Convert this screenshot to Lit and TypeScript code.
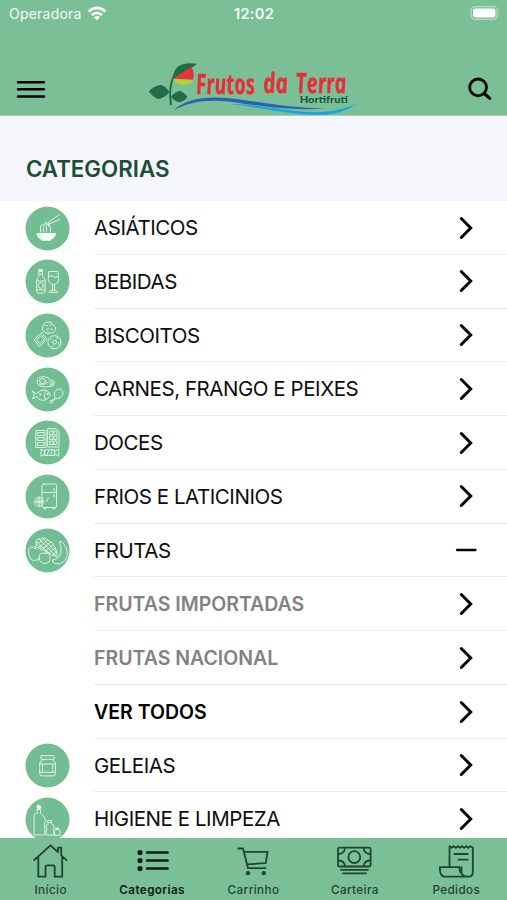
import { LitElement, html, css, svg, nothing } from "lit";
import { customElement } from "lit/decorators.js";
import { classMap } from "lit/directives/class-map.js";

interface Row {
  label: string;
  icon?: string;
  kind?: "sub" | "all";
  open?: boolean;
}

const rows: Row[] = [
  { label: "ASIÁTICOS", icon: "asian" },
  { label: "BEBIDAS", icon: "drinks" },
  { label: "BISCOITOS", icon: "cookies" },
  { label: "CARNES, FRANGO E PEIXES", icon: "meat" },
  { label: "DOCES", icon: "sweets" },
  { label: "FRIOS E LATICINIOS", icon: "fridge" },
  { label: "FRUTAS", icon: "fruit", open: true },
  { label: "FRUTAS IMPORTADAS", kind: "sub" },
  { label: "FRUTAS NACIONAL", kind: "sub" },
  { label: "VER TODOS", kind: "all" },
  { label: "GELEIAS", icon: "jar" },
  { label: "HIGIENE E LIMPEZA", icon: "cleaning" },
];

const glyphs: Record<string, unknown> = {
  asian: svg`
    <path class="fill" d="M11 26.5H30.4C30.4 30 28 32.3 25.5 33.3V34.2H16V33.3C13.4 32.3 11 30 11 26.5Z"/>
    <path d="M21 17L34 8.3M22 18.2L34.6 12.8M15 25.5V21C15 18.5 16.5 17.5 18 17.5M17.8 25.5V20.5C17.8 18 20.5 17 20.5 15.5M20.8 25.5V17M23 20V17.5M25 25.5V21.5C25 20 23.5 19 23.5 17"/>`,
  drinks: svg`
    <path class="fill" d="M13.5 10H17V12.5H13.5Z"/>
    <path d="M13.5 10H17V16C17 18 19.6 18.5 19.6 21V32Q19.6 33.5 18 33.5H12.7Q11.2 33.5 11.2 32V21C11.2 18.5 13.5 18 13.5 16ZM13.5 14.5H17M11.2 21.5H19.6M11.2 30.5H19.6"/>
    <ellipse cx="15.4" cy="26" rx="2.5" ry="3"/>
    <path d="M23.7 12H32.2L33.2 19C33.2 23 31 24.8 28 24.8S22.7 23 22.7 19ZM23 17Q26 15.5 28 17T33 17M27 24.8V30.5M29 24.8V30.5M23.5 32.5Q24 30.5 28 30.5T32.5 32.5Z"/>`,
  cookies: svg`
    <path d="M18 11Q20 7.5 23.5 8.5Q27 8.5 28 12Q31 13 29.8 16Q29 20 25 19.5Q21.5 21.5 19 18.5Q15.5 17 17 14Z"/>
    <path d="M20 12h2M24 11.5h1.5M21 16l2-1M25 15.5l2 .5M22 18.2h1"/>
    <path d="M9 25.8L16 19.2L21.5 25.8L14 32.7ZM11.5 25.8L16 21.8L19 25.8L14.3 30Z"/>
    <circle cx="29" cy="28.7" r="6.6"/><circle cx="29" cy="28.7" r="2"/><path d="M25 26l1-.8M31 24.5l1 .6M33 29.5l.3 1.5M26.5 32.5l1 .6"/>`,
  meat: svg`
    <path d="M12 12Q14 8.5 19 9.3Q24 9.5 25 13Q29 12.5 29 16Q28.5 19.5 24 19Q15 20.5 12 16.5Z"/>
    <ellipse cx="17" cy="13.5" rx="3" ry="2.4"/><path d="M14 16.5Q20 18 23 14"/><circle cx="25.8" cy="16" r="1.4"/>
    <path d="M7 23.5L11 26.5Q15 21.5 20 22.5Q24 24 25 27.5Q22 33 17.5 33Q13.5 33 11 29L7 31.5L8.7 27.5ZM20 23Q17.5 27.5 20 32.5"/><circle cx="22" cy="26.5" r=".7"/><path d="M14 26l2 1-2 1.5"/>
    <path d="M29.5 30.5C27.5 26 30 21.5 34 21.5C38.5 22 38.5 28.5 34.5 30Q32 31.4 29.7 31.5L27 34.3Q27.5 36 26 35.7Q24 35.5 24.7 33.8Q24.4 32.5 26 33Z"/>`,
  sweets: svg`
    <path d="M10.7 10H20.5V27H10.7ZM12.5 12H18.7V15H12.5ZM12.5 17H18.7V20H12.5ZM12.5 22H18.7V25H12.5Z"/>
    <path d="M22.5 8.2H31L33.5 11V26.5H22.5ZM24.5 10.5H27.5V14H24.5ZM28.7 10.5H31.5V14H28.7ZM24.5 15.5H27.5V19H24.5ZM28.7 15.5H31.5V19H28.7ZM24.5 20.5H27.5V24H24.5ZM28.7 20.5H31.5V24H28.7Z"/>
    <path d="M19.5 29.3H29.2V35H19.5ZM19.5 31L15.5 28.6V35.8L19.5 33.5M29.2 31L33.3 28.6V35.8L29.2 33.5M21.5 34.5L23.5 29.8M25 34.5L27 29.8"/>`,
  fridge: svg`
    <path d="M18 9.5H29.5Q31 9.5 31 11V31.5Q31 33 29.5 33H18Q16.5 33 16.5 31.5V11Q16.5 9.5 18 9.5ZM16.5 18H31M28.6 14V16.3M28.6 20V23M18.5 33V34.3H20.5V33M27.3 33V34.3H29.3V33M21 27L23 23.5"/>
    <path d="M13.5 22V32.8M8 27.3H19M9.7 23.5L17.3 31M17.3 23.5L9.7 31M11.5 22.8L13.5 24.5L15.5 22.8M11.5 32L13.5 30.2L15.5 32M9 25.3L11 27.3L9 29.3M18 25.3L16 27.3L18 29.3"/>`,
  fruit: svg`
    <path d="M10.5 14Q11 9.5 15 10.5Q19.5 8 23 12Q27 13 29.5 19Q32.5 23 31.5 28Q26.5 27.5 22.5 24Q16 21.5 14 18Q11 18 10.5 14Z"/>
    <path d="M13 15L18 10.5M14.5 18L22 11.5M17.5 20L25 13.8M20.5 22.3L27.3 16.5M23.5 24.7L29 20M27 26.7L31 23.5M14 11L30 27M18 10.5L31 24M12 14L24 25"/>
    <path d="M9.5 20Q5 16.5 3.2 21Q2.2 27 6 31Q8 33 10.5 31.5Q13 32.5 14 29.5M9.5 20Q13.5 17.5 16 22M9.5 20Q9 17 11 16"/>
    <path d="M20 24.7Q13.8 23.2 13.5 29Q14.5 35.3 19.5 35Q25 34.5 24.7 28.5Q24 24 20 24.7Z"/>
    <path d="M34 13.5L35.5 12.7Q43 19 41.5 28Q38 36.5 30 35.2Q26.5 34 27 31.5Q34 30.5 35.5 24Q36.3 18 34 13.5Z"/>`,
  jar: svg`
    <rect x="15.3" y="12.2" width="13.6" height="3.6" rx="1"/>
    <path d="M16.5 16V17.5Q14.2 18 14.2 20V30Q14.2 32.4 16.5 32.4H27.5Q30 32.4 30 30V20Q30 18 27.7 17.5V16M14.2 20.5H30M14.2 28.8H30M17 20.5V28.8M27.3 20.5V28.8"/>`,
  cleaning: svg`
    <path class="fill" d="M11 8.5L12.7 7L16 9L14.5 12.2L12 11.5Z"/>
    <path d="M11.7 12H15V15.5Q20 19 20.2 24Q17.8 26.5 19.3 30V37.5H8.6V18Q8.7 16 11.7 15.5Z"/>
    <path d="M22.5 23H26V26.2Q28.8 27 28.5 30Q26.8 32 28.5 34V37.5H20.7V34Q22.2 32 20.7 29.5Q20.5 27 22.5 26.2ZM22.5 25H26"/>
    <path class="fill" d="M30 30H33.3V32.3H30Z"/>
    <path d="M29 37.5V34Q29 32 31.7 31.5Q34.7 32 34.7 34V37.5Z"/>`,
};

const tabs = [
  {
    label: "Início",
    icon: svg`<path d="M1.3 17L17.5 2.3L25 9.2M25 9V4.6H28.2V12.3L33.5 17.2M5.3 14.5V33.7H12.5V24Q12.5 22.3 14.2 22.3H20Q21.7 22.3 21.7 24V33.7H29.2V14.5"/>`,
  },
  {
    label: "Categorias",
    active: true,
    icon: svg`<path d="M12 9.6H32.6M12 17.6H32.6M12 25.6H32.6" stroke-width="2.5"/><g fill="currentColor" stroke="none"><circle cx="5" cy="9.6" r="2.6"/><circle cx="5" cy="17.6" r="2.6"/><circle cx="5" cy="25.6" r="2.6"/></g>`,
  },
  {
    label: "Carrinho",
    icon: svg`<path d="M2.3 5.5H7L12 25.2H29.5M8.2 8.9H31.6L29.7 20.2L11 21.4"/><g fill="currentColor" stroke="none"><circle cx="12" cy="30.1" r="2.2"/><circle cx="27.8" cy="30.1" r="2.2"/></g>`,
  },
  {
    label: "Carteira",
    icon: svg`<rect x="1" y="4.7" width="32.6" height="18.8" rx="1.5"/><circle cx="17.3" cy="14.1" r="5.9"/><path d="M8 5Q7.5 10.8 1.4 11M26.7 5Q27 10.8 33.3 11M1.4 17.5Q7.5 17.7 8 23.3M33.3 17.5Q27 17.7 26.7 23.3M4 26.8H31M6 30.3H29"/>`,
  },
  {
    label: "Pedidos",
    icon: svg`<path d="M10.5 24V3.2L12.5 4.8L14.6 3.2L16.7 4.8L18.8 3.2L20.9 4.8L23 3.2L25.1 4.8L27.2 3.2L29.3 4.8L31.4 3.2L33.8 4.5V29Q33.8 33.6 29.8 33.6H5Q.8 33.1.8 24.1H20.5Q20.5 30 22.5 30V24.1M22.5 30Q23.5 33.6 29 33.6M15.3 11H28.7M19.5 16.7H28.7"/>`,
  },
];

@customElement("app-root")
export class AppRoot extends LitElement {
  static styles = css`
    :host {
      display: flex;
      flex-direction: column;
      width: 507px;
      height: 900px;
      overflow: hidden;
      background: #fff;
      color: #0d0d0d;
      font-family: Inter, "Liberation Sans", sans-serif;
    }
    svg { display: block; flex: none; }
    .top { background: #7bbf97; height: 115px; flex: none; border-bottom: 1px solid #a8cdb8; }
    .status {
      height: 28px;
      display: grid;
      grid-template-columns: 1fr auto 1fr;
      align-items: center;
      padding: 0 6px 0 9px;
      color: #f3fbf5;
      font-size: 14px;
    }
    .carrier { display: flex; align-items: center; gap: 5px; letter-spacing: 0.22px; padding-bottom: 2px; }
    .clock { font-weight: 600; font-size: 14.6px; letter-spacing: 0.3px; margin-right: 2px; }
    .battery { justify-self: end; padding-bottom: 1px; }
    .nav { display: grid; grid-template-columns: 1fr auto 1fr; grid-template-rows: 54px; align-items: center; height: 87px; padding: 33px 15px 0 16px; box-sizing: border-box; }
    .search { justify-self: end; }
    .logo-name { font-family: "Open Sans", "Liberation Sans", sans-serif; font-weight: 700; font-style: italic; font-size: 28px; fill: #e3303a; stroke: #e3303a; stroke-width: 0.3px; }
    .logo-sub { font-family: Lato, sans-serif; font-weight: 900; font-size: 9.8px; fill: #17563a; }
    .title {
      height: 85px;
      flex: none;
      display: flex;
      align-items: center;
      padding: 20px 0 0 26px;
      box-sizing: border-box;
      background: #f4f6fb;
    }
    h1 { margin: 0; font-size: 22.3px; line-height: 28px; font-weight: 600; color: #1d4d35; }
    .list { flex: 1; min-height: 0; overflow: hidden; padding-top: 0.2px; }
    .row { display: flex; height: 53.74px; padding-left: 25px; }
    .badge { width: 45px; flex: none; margin-right: 24px; display: flex; align-items: center; }
    .badge svg { fill: none; stroke: #e0f5e7; stroke-width: 0.95; stroke-linejoin: round; stroke-linecap: round; }
    .badge .disc { fill: #72bd92; stroke: none; }
    .badge .fill { fill: #f4fff7; stroke: none; }
    .body {
      flex: 1;
      display: flex;
      align-items: center;
      justify-content: space-between;
      padding: 0.4px 30px 0 0;
      box-sizing: border-box;
      border-bottom: 1.5px solid #ededed;
      font-size: 20.5px;
      letter-spacing: -0.45px;
      white-space: nowrap;
    }
    .sub .body { color: #828282; font-weight: 600; font-size: 19.5px; letter-spacing: 0; padding-top: 1px; }
    .all .body { color: #000; font-weight: 600; font-size: 19.5px; letter-spacing: 0; padding-top: 1px; }
    .tabs { height: 62px; flex: none; display: grid; grid-template-columns: repeat(5, 1fr); background: #7bbf97; color: #1d452f; }
    .tab { display: flex; flex-direction: column; align-items: center; padding-top: 5px; font-size: 11.7px; line-height: 14px; font-weight: 500; letter-spacing: 0.4px; }
    .tab svg { margin-bottom: 5px; }
    .active { color: #0b1c12; font-weight: 600; }
  `;

  private header() {
    return html`
      <header class="top">
        <div class="status">
          <div class="carrier">
            <span>Operadora</span>
            <svg width="20" height="15" viewBox="0 0 20 15" fill="none" stroke="#fff" stroke-width="2.6">
              <path d="M1.6 5.6Q10-1.8 18.4 5.6M4.8 9Q10 4.6 15.2 9" />
              <path d="M7 11.2Q10 8.8 13 11.2L10 14.4Z" fill="#fff" stroke="none" />
            </svg>
          </div>
          <span class="clock">12:02</span>
          <svg class="battery" width="31" height="15" viewBox="0 0 31 15">
            <rect x="1.2" y=".7" width="26" height="12.6" rx="3.8" fill="none" stroke="#b5dcc4" stroke-width="1.3" />
            <rect x="3" y="2.5" width="22.4" height="9" rx="2.2" fill="#fff" />
            <path d="M28.7 5.2Q30.5 7 28.7 8.8Z" fill="#b5dcc4" />
          </svg>
        </div>
        <nav class="nav">
          <svg width="30" height="24" viewBox="0 0 30 24" stroke="#050505" stroke-width="2.5" stroke-linecap="round">
            <path d="M2 6.2H28M2 13.3H28M2 20.4H28" />
          </svg>
          <svg class="logo" width="214" height="54" viewBox="147 61 214 54">
            <path d="M171 105C169.5 95 169.5 84 174 76" fill="none" stroke="#216b45" stroke-width="2" />
            <path d="M173 79C173 66 182 61.5 197 63.8Q193.5 66.5 191 68.5Z" fill="#216b45" />
            <path d="M173 78.5L191 67Q195.5 73 193 79.8Z" fill="#e9333c" />
            <path d="M173 79L194 80Q189.5 85 183 85Q176 85 173 79Z" fill="#add136" />
            <path d="M148.8 91.5Q155 84.8 161 85Q167 87 169.5 92.5Q163 99 158 99Q153 97 148.8 91.5Z" fill="#216b45" />
            <path d="M171 96.5Q176.5 90.5 181 91Q185 93.5 187.5 96.8Q184 102 179 102.3Q174 101 171 96.5Z" fill="#216b45" />
            <path d="M173.5 110.5C189 96 214 96 240 99.5C271 104 296 108 326 108.5C289 111 262 106 239 103C211 98.5 190 101 173.5 110.5Z" fill="#2c62b3" />
            <path d="M229 104C262 104 284 111.5 315 112.2C333 112 346 108.5 358 103C347 111 334 115 317 114.9C283 114 259 106.5 229 104Z" fill="#14a5e2" />
            <g transform="translate(-9.8 0.8) skewX(6)">
              <text class="logo-name" x="197" y="92.8" textLength="59" lengthAdjust="spacingAndGlyphs">Frutos</text>
              <text class="logo-name" x="264" y="92.5" textLength="25" lengthAdjust="spacingAndGlyphs">da</text>
              <text class="logo-name" x="297" y="92" textLength="50.5" lengthAdjust="spacingAndGlyphs">Terra</text>
            </g>
            <text class="logo-sub" x="299.7" y="102.7" textLength="48" lengthAdjust="spacingAndGlyphs">Hortifruti</text>
          </svg>
          <svg class="search" width="24" height="24" viewBox="0 0 24 24" fill="none" stroke="#050505" stroke-width="2.8">
            <circle cx="10.1" cy="11.4" r="8.4" />
            <path d="M16.3 17.5L21.7 22.4" stroke-width="3.2" stroke-linecap="round" />
          </svg>
        </nav>
      </header>
    `;
  }

  private row(r: Row) {
    return html`
      <div class=${classMap({ row: true, sub: r.kind === "sub", all: r.kind === "all" })}>
        <div class="badge">
          ${r.icon
            ? html`<svg width="45" height="45" viewBox="-0.5 -0.5 45 45"><circle class="disc" cx="22" cy="22" r="22" />${glyphs[r.icon]}</svg>`
            : nothing}
        </div>
        <div class="body">
          <span>${r.label}</span>
          <svg width="22" height="26" viewBox="0 0 22 26" fill="none" stroke="#050505" stroke-linecap="round">
            ${r.open
              ? svg`<path d="M2 13H20.5" stroke-width="2.3" />`
              : svg`<path d="M6.3 3.5L15.7 13L6.3 22.5" stroke-width="3" />`}
          </svg>
        </div>
      </div>
    `;
  }

  render() {
    return html`
      ${this.header()}
      <section class="title"><h1>CATEGORIAS</h1></section>
      <main class="list">${rows.map((r) => this.row(r))}</main>
      <footer class="tabs">
        ${tabs.map(
          (t) => html`
            <div class=${classMap({ tab: true, active: !!t.active })}>
              <svg width="35" height="35" viewBox="0 0 35 35" fill="none" stroke="currentColor" stroke-width="1.8" stroke-linecap="round" stroke-linejoin="round">${t.icon}</svg>
              <span>${t.label}</span>
            </div>
          `,
        )}
      </footer>
    `;
  }
}
